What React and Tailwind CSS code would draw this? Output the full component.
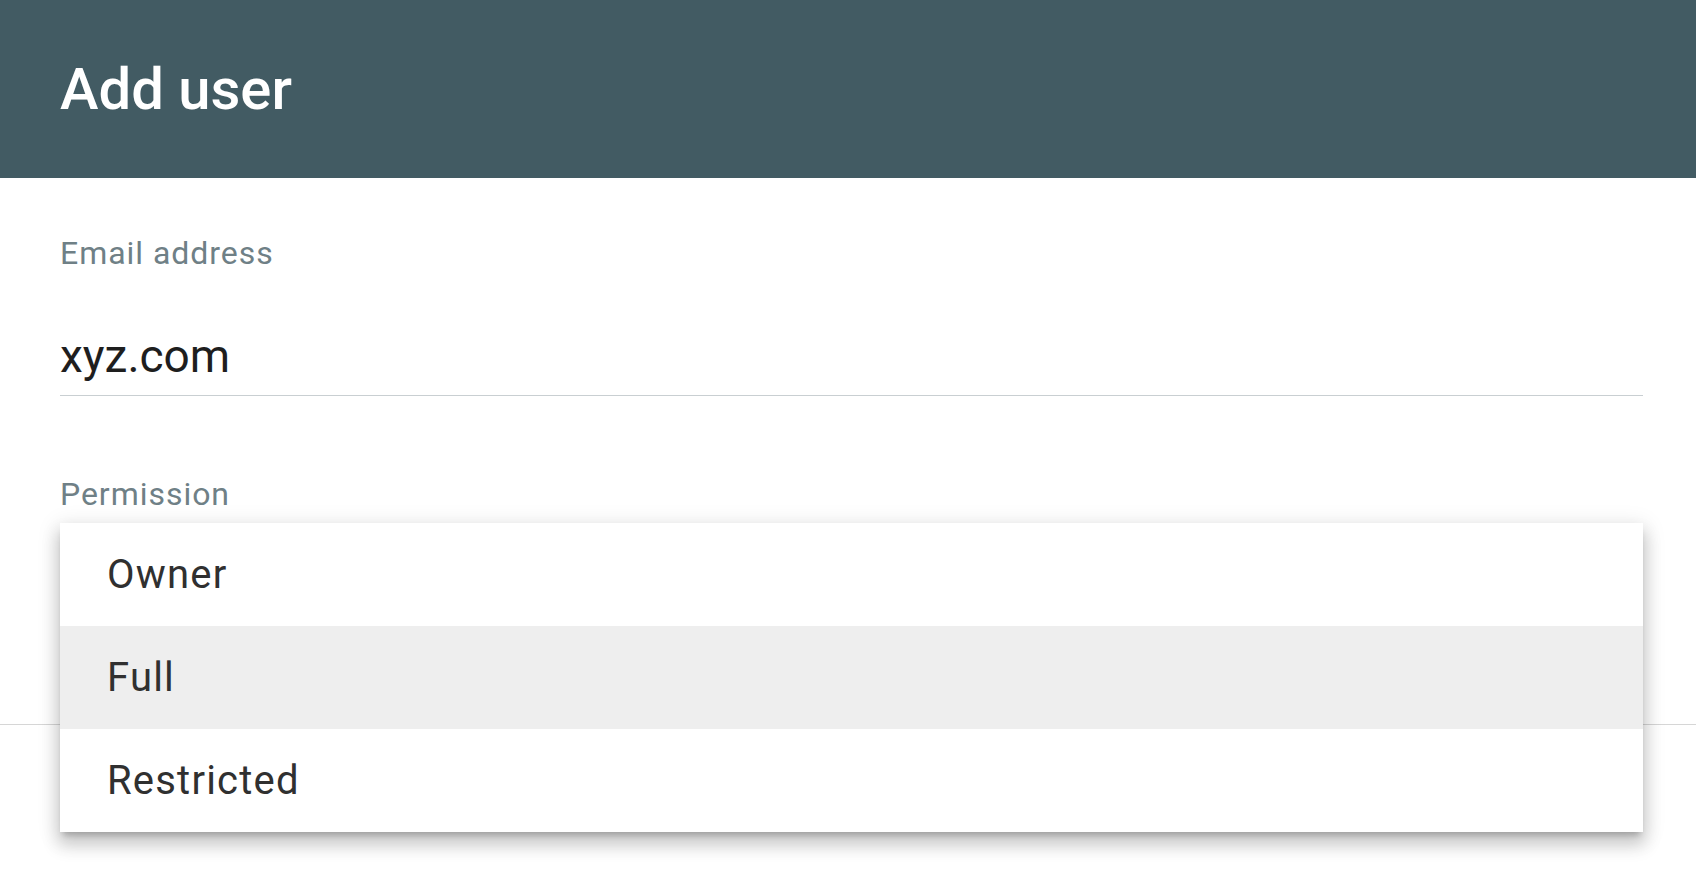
const options = ['Owner', 'Full', 'Restricted'];

const MenuItem = ({ label, active }) => (
  <div
    className={`h-[103px] flex items-center pl-[47px] text-[40px] tracking-[0.03em] text-[#303030] ${
      active ? 'bg-[#eeeeee]' : 'bg-white'
    }`}
  >
    {label}
  </div>
);

export default function App() {
  return (
    <div className="w-[1696px] h-[870px] bg-white overflow-hidden font-['Roboto',sans-serif]">
      <header className="h-[178px] bg-[#425b63] flex items-center px-[60px]">
        <h1 className="text-[58px] font-medium text-white leading-none">Add user</h1>
      </header>

      <div className="pl-[60px] pr-[53px]">
        <label className="block mt-[59px] text-[32px] leading-none tracking-[0.03em] text-[#6f8086]">
          Email address
        </label>
        <div className="mt-[64px] pb-[16px] border-b border-[#c9cfd2] text-[46px] leading-none text-[#1e1e1e]">
          xyz.com
        </div>

        <div className="relative mt-[82px]">
          <label className="block text-[32px] leading-none tracking-[0.03em] text-[#6f8086]">
            Permission
          </label>
          <div className="h-[214px]" />
          <div className="absolute top-[45px] left-0 right-0 bg-white shadow-[0_12px_16px_2px_rgba(0,0,0,0.16),0_4px_20px_3px_rgba(0,0,0,0.1),0_6px_6px_-3px_rgba(0,0,0,0.2)] z-10">
            {options.map((o) => (
              <MenuItem key={o} label={o} active={o === 'Full'} />
            ))}
          </div>
        </div>
      </div>

      <div className="border-t border-[#d6d6d6]" />
    </div>
  );
}
